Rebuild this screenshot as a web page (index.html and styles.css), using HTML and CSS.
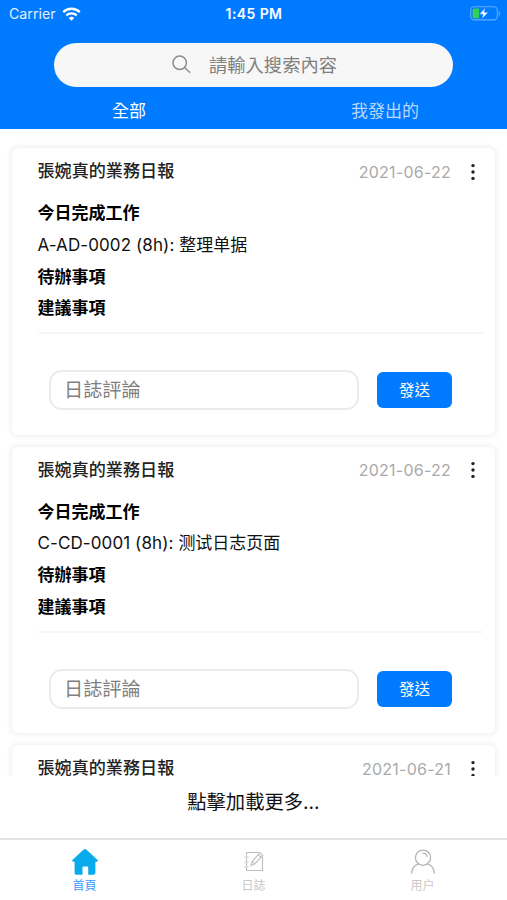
FILE: index.html
```html
<!DOCTYPE html>
<html lang="zh-Hant">
<head>
<meta charset="utf-8">
<title>日誌</title>
<link rel="stylesheet" href="styles.css">
</head>
<body>
<div class="app">
  <header class="header">
    <div class="status">
      <div class="carrier"><span>Carrier</span>
        <svg width="19" height="14" viewBox="0 0 19 14" fill="none" stroke="#fff" stroke-width="2.3"><path d="M1.2 5.1a12 12 0 0 1 16.6 0M4.3 8.4a7.500 7.500 0 0 1 10.400 0"/><path d="M6.800 11a3.900 3.900 0 0 1 5.400 0L9.500 13.800z" fill="#fff" stroke="none"/></svg>
      </div>
      <div class="clock">1:45 PM</div>
      <svg class="battery" width="31" height="15" viewBox="0 0 31 15"><rect x=".7" y=".7" width="26.600" height="13.200" rx="3.600" fill="none" stroke="#65aaff" stroke-width="1.100"/><path d="M28.800 5v5c1.800-.8 1.800-4.200 0-5z" fill="#65aaff"/><path d="M4.200 2.400H9v9.800H4.200Q2.600 12.200 2.600 10.600V4Q2.600 2.400 4.200 2.400z" fill="#30d158"/><path d="M15.500 1.800 9.300 8.200h3.800l-1.300 4.900 6.400-6.800h-4z" fill="#fff" stroke="#007aff" stroke-width=".5"/></svg>
    </div>
    <div class="search">
      <svg width="19" height="19" viewBox="0 0 19 19" fill="none" stroke="#8c8c8c" stroke-width="1.500"><circle cx="7.700" cy="7.700" r="6.700"/><path d="m12.500 12.500 5.700 5.300"/></svg>
      <span>請輸入搜索內容</span>
    </div>
    <nav class="tabs"><span>全部</span><span class="dim">我發出的</span></nav>
  </header>
  <main class="feed">
    <article class="card">
      <div class="card-head"><h2>張婉真的業務日報</h2><time>2021-06-22</time><svg class="more" width="6" height="18" viewBox="0 0 6 18"><circle cx="3" cy="2.600" r="1.700"/><circle cx="3" cy="9" r="1.700"/><circle cx="3" cy="15.400" r="1.700"/></svg></div>
      <div class="content"><b>今日完成工作</b><p><span class="code">A-AD-0002 (8h): </span><span lang="zh-Hans">整理单据</span></p><b>待辦事項</b><b>建議事項</b></div>
      <div class="reply"><div class="field">日誌評論</div><div class="send">發送</div></div>
    </article>
    <article class="card">
      <div class="card-head"><h2>張婉真的業務日報</h2><time>2021-06-22</time><svg class="more" width="6" height="18" viewBox="0 0 6 18"><circle cx="3" cy="2.600" r="1.700"/><circle cx="3" cy="9" r="1.700"/><circle cx="3" cy="15.400" r="1.700"/></svg></div>
      <div class="content"><b>今日完成工作</b><p><span class="code">C-CD-0001 (8h): </span><span lang="zh-Hans">测试日志页面</span></p><b>待辦事項</b><b>建議事項</b></div>
      <div class="reply"><div class="field">日誌評論</div><div class="send">發送</div></div>
    </article>
    <article class="card">
      <div class="card-head"><h2>張婉真的業務日報</h2><time>2021-06-21</time><svg class="more" width="6" height="18" viewBox="0 0 6 18"><circle cx="3" cy="2.600" r="1.700"/><circle cx="3" cy="9" r="1.700"/><circle cx="3" cy="15.400" r="1.700"/></svg></div>
    </article>
  </main>
  <div class="load">點擊加載更多...</div>
  <footer class="tabbar">
    <div class="item active"><svg width="28" height="28" viewBox="0 0 28 28"><path d="M12.700 1.500q1.300-1.100 2.600 0L26.600 12q.8 1.500-.8 1.700H24.400V25q0 1.700-1.700 1.700H17.200V19.500q0-1-1-1H12.500q-1 0-1 1V26.700H5.300Q3.600 26.700 3.600 25V13.700H2.200Q.6 13.500 1.400 12z" fill="#0aabec"/></svg><span>首頁</span></div>
    <div class="item"><svg width="28" height="28" viewBox="0 0 28 28" fill="none" stroke="#bdbdbd" stroke-width="1.100"><path d="M19 4.500H6.500v3M6.500 10v3M6.500 15v3M6.500 20v2.500H22.500V9M4.500 9h4M4.500 14h4M4.500 19h4M11 17.500l1.200-4.200L20 4.700l2.800 2.500-7.900 8.700zM12.200 13.300l2.700 2.600M18.300 6.500l2.800 2.600"/></svg><span>日誌</span></div>
    <div class="item"><svg width="28" height="28" viewBox="0 0 28 28" fill="none" stroke="#b5b5b5" stroke-width="1.300"><circle cx="14" cy="9.700" r="7.600"/><path d="M2.600 25.500c.2-4.800 3.200-8.300 7.100-9.600M25.400 25.500c-.2-4.800-3.200-8.300-7.100-9.600M13.500 5.200c2.500 0 4.300 1.300 4.700 3.700"/></svg><span>用户</span></div>
  </footer>
</div>
</body>
</html>
```
FILE: styles.css
```css
* { box-sizing: border-box; }
body { margin: 0; background: #fff; font-family: Inter, "Noto Sans CJK TC", sans-serif; color: #111; }
[lang="zh-Hans"] { font-family: "Noto Sans CJK SC", sans-serif; }
svg { display: block; flex: none; }
h2, p { margin: 0; }
.app { width: 507px; height: 900px; display: flex; flex-direction: column; overflow: hidden; }
.header { height: 129px; flex: none; background: #007aff; color: #fff; }
.status { height: 27px; display: grid; grid-template-columns: 1fr auto 1fr; align-items: center; padding: 0 6px 0 9px; }
.carrier { display: flex; align-items: center; gap: 6px; font-size: 14.200px; color: #e3f0ff; }
.clock { font-size: 14px; font-weight: 600; letter-spacing: .4px; padding-right: 2px; }
.battery { justify-self: end; }
.search { width: 399px; height: 44px; margin: 16px auto 0; border-radius: 22px; background: #f7f7f7; color: #808080; font-size: 18.300px; line-height: 40px; display: flex; align-items: center; justify-content: center; gap: 18px; padding: 0 0 1px 2px; }
.tabs { height: 42px; display: grid; grid-template-columns: 1fr 1fr; text-align: center; font-size: 17px; line-height: 49px; padding-left: 3px; }
.dim { color: #b7d7ff; padding-left: 8px; }
.feed { height: 647px; flex: none; overflow: hidden; padding: 19px 12px 0; display: flex; flex-direction: column; gap: 12px; }
.card { height: 286.500px; flex: none; background: #fff; border-radius: 6px; box-shadow: 0 0 5px 2px rgba(0,0,0,.055); padding: 0 12px 0 25.500px; }
.card-head { height: 46px; display: flex; align-items: center; }
.card-head h2 { flex: 1; font-size: 17.100px; font-weight: 500; line-height: 24px; color: #222; }
time { font-size: 16px; letter-spacing: .25px; color: #aaa; margin: 1px 19px 0 0; }
.more { margin: 1px 7px 0 0; fill: #222; }
.content { height: 140px; padding-top: 4px; border-bottom: 2px solid #f7f7f7; font-size: 17px; line-height: 31.800px; }
.content b { display: block; height: 31.800px; font-weight: 700; color: #000; }
.content p { height: 31.800px; display: flex; white-space: pre; line-height: 30px; }
.code { font-size: 17px; letter-spacing: .1px; }
.content [lang] { line-height: 28px; }
.reply { display: flex; align-items: center; padding: 36px 0 0 11.500px; gap: 18px; }
.field { width: 310px; height: 40px; border: 2px solid #ebebeb; border-radius: 13px; color: #808080; font-size: 19.200px; line-height: 36px; padding-left: 13px; }
.send { width: 75px; height: 36px; border-radius: 6px; background: #007aff; color: #fff; font-size: 15.500px; font-weight: 400; line-height: 37px; text-align: center; }
.load { height: 62px; flex: none; text-align: center; font-size: 19.300px; line-height: 52px; }
.tabbar { height: 62px; flex: none; border-top: 2px solid #e4e4e4; display: grid; grid-template-columns: repeat(3, 1fr); }
.item { display: flex; flex-direction: column; align-items: center; padding-top: 8px; font-size: 12px; line-height: 17px; color: #c8c8c8; gap: 1px; }
.active { color: #3c9bff; }
```
